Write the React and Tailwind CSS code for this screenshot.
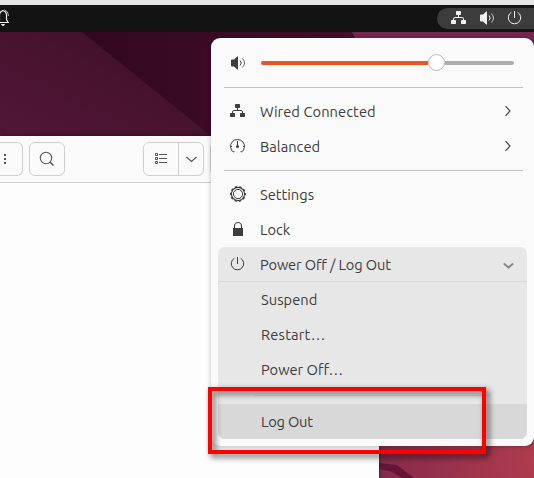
import React from "react";

function Wallpaper() {
  return (
    <svg className="absolute inset-0" width="534" height="478" viewBox="0 0 534 478">
      <defs>
        <linearGradient id="left" x1="0" y1="1" x2="1" y2="0">
          <stop offset="0" stopColor="#521737" />
          <stop offset="1" stopColor="#3d0f27" />
        </linearGradient>
        <linearGradient id="mid" x1="0" y1="0" x2="1" y2="0">
          <stop offset="0" stopColor="#33071f" />
          <stop offset="1" stopColor="#430f2a" />
        </linearGradient>
        <linearGradient id="warm" gradientUnits="userSpaceOnUse" x1="379" y1="478" x2="534" y2="440">
          <stop offset="0" stopColor="#852a4b" />
          <stop offset="1" stopColor="#b13c4e" />
        </linearGradient>
      </defs>
      <rect y="32" width="211" height="104" fill="url(#left)" />
      <path d="M82 32H360V136H211Z" fill="url(#mid)" />
      <path d="M352 32H534V240H460Z" fill="#76264f" />
      <rect x="379" y="240" width="155" height="238" fill="url(#warm)" />
      <path d="M379 463l18 2 17 13h-12l-10-6-13-3z" fill="#651637" />
    </svg>
  );
}

function NetworkIcon() {
  return (
    <svg width="16" height="16" viewBox="0 0 16 16" fill="currentColor">
      <rect x="5" y="1" width="5" height="4" rx=".7" />
      <rect x="0" y="10" width="5" height="4" rx=".7" />
      <rect x="10" y="10" width="5" height="4" rx=".7" />
      <path d="M7.500 5v3M2.500 10V9q0-1.500 1.500-1.500h7q1.500 0 1.500 1.500v1" fill="none" stroke="currentColor" />
    </svg>
  );
}

function VolumeIcon() {
  return (
    <svg width="16" height="16" viewBox="0 0 16 16" fill="none" stroke="currentColor">
      <path d="M1 5.500Q1 4.500 2 4.500H4L7.300 1.500H8V14.500H7.300L4 11.500H2Q1 11.500 1 10.500Z" fill="currentColor" stroke="none" />
      <path d="M10 5.500q2.500 2.500 0 5" />
      <path d="M12.300 3.500q4.400 4.500 0 9" opacity=".8" />
    </svg>
  );
}

function PowerIcon() {
  return (
    <svg width="16" height="16" viewBox="0 0 16 16" fill="none" stroke="currentColor">
      <path d="M7.500 1v7" />
      <path d="M4.300 2.300a6.200 6.200 0 1 0 6.400 0" />
    </svg>
  );
}

function GaugeIcon() {
  return (
    <svg width="16" height="16" viewBox="0 0 16 16" fill="none" stroke="currentColor">
      <path d="M3.500 14.200A7 7 0 1 1 11.500 14.200" />
      <path d="M7.500 3v5M1 8.500h1M13 8.500h1M3.500 14.200l.7-1.200M11.500 14.200l-.7-1.200" />
      <circle cx="7.500" cy="8.500" r="1.500" fill="currentColor" stroke="none" />
    </svg>
  );
}

function GearIcon() {
  return (
    <svg width="16" height="16" viewBox="0 0 16 16" fill="none" stroke="currentColor">
      <circle cx="8" cy="8" r="4.600" />
      <circle cx="8" cy="8" r="6.600" strokeWidth="1.100" />
      <circle cx="8" cy="8" r="7.300" strokeWidth="1.300" strokeDasharray="2.500 2.084" strokeDashoffset="1.250" />
    </svg>
  );
}

function LockIcon() {
  return (
    <svg width="16" height="16" viewBox="0 0 16 16" fill="none" stroke="currentColor">
      <rect x="3" y="7" width="10" height="8" fill="currentColor" stroke="none" />
      <path d="M4.500 7V5.200a3.500 3.700 0 0 1 7 0V7" strokeWidth="1.100" />
    </svg>
  );
}

function BellIcon() {
  return (
    <svg className="-ml-[5px]" width="16" height="18" viewBox="0 0 16 18" fill="none" stroke="currentColor">
      <path d="M3 13.500h11M4.500 13V6q0-3 3.500-4.500Q11.500 3 11.500 6v4.500l1.500 2.500" strokeWidth="1.200" />
      <path d="M9.500 1q4 1 4 6" opacity=".75" />
      <path d="M6 15h4l-1 1.800H7z" fill="currentColor" stroke="none" />
    </svg>
  );
}

function ChevronRight() {
  return (
    <svg className="-mt-0.5" width="6" height="12" viewBox="0 0 6 12" fill="none" stroke="#4a4a4a" strokeWidth="1.200">
      <path d="M.5 1.200 5 6 .5 10.800" />
    </svg>
  );
}

const font = "font-['Ubuntu','Noto_Sans',sans-serif]";

function Row({ icon, label, trailing, spacing = "" }) {
  return (
    <div className="flex h-[35px] items-center pl-[19px] pr-[23px]">
      <span className="w-[30px] shrink-0 pb-0.5">{icon}</span>
      <span className={`pt-0.5 text-[14.667px] leading-none whitespace-nowrap ${spacing}`}>{label}</span>
      <span className="ml-auto">{trailing}</span>
    </div>
  );
}

function SubItem({ label, spacing = "", className = "" }) {
  return (
    <div className={`flex h-[35px] items-center pl-[43px] text-[14.667px] leading-none ${className}`}>
      <span className={`pt-0.5 whitespace-nowrap ${spacing}`}>{label}</span>
    </div>
  );
}

function SystemMenu() {
  return (
    <div className={`absolute left-[211px] top-[38px] h-[408px] w-[323px] rounded-[9px] bg-[#fafafa] text-[#3d3d3d] shadow-[0_1px_5px_rgba(0,0,0,0.25)] ${font}`}>
      <div className="flex h-[49px] items-center pl-[19px]">
        <VolumeIcon />
        <div className="ml-[15px] flex w-[253px] items-center">
          <div className="h-1 w-[167px] rounded-l-full bg-[#ee5320]" />
          <div className="h-[17px] w-[17px] rounded-full border border-[#b5b5b5] bg-white" />
          <div className="h-1 flex-1 rounded-r-full bg-[#adadad]" />
        </div>
      </div>
      <div className="ml-[13px] h-px w-[299px] bg-[#c4c4c4]" />
      <div className="pt-1.5">
        <Row icon={<NetworkIcon />} label="Wired Connected" spacing="tracking-[0.08px]" trailing={<ChevronRight />} />
        <Row icon={<GaugeIcon />} label="Balanced" trailing={<ChevronRight />} />
      </div>
      <div className="ml-[13px] mt-1.5 h-px w-[299px] bg-[#c4c4c4]" />
      <div className="pt-1.5">
        <Row icon={<GearIcon />} label="Settings" />
        <Row icon={<LockIcon />} label="Lock" />
      </div>
      <div className="mx-[7px] overflow-hidden rounded-[7px] bg-[#e7e7e7]">
        <div className="flex h-[35px] items-center border-b border-[#d8d8d8] pl-3 pr-[13px]">
          <span className="w-[30px] pb-px"><PowerIcon /></span>
          <span className="pt-[3px] text-[14.667px] leading-none tracking-[-0.14px] whitespace-nowrap">Power Off / Log Out</span>
          <svg className="ml-auto mt-1" width="11" height="8" viewBox="0 0 11 8" fill="none" stroke="#858585" strokeWidth="1.800">
            <path d="m.8 1.500 4.700 4 4.700-4" />
          </svg>
        </div>
        <SubItem label="Suspend" spacing="tracking-[0.06px]" />
        <SubItem label="Restart…" spacing="tracking-[0.2px]" />
        <SubItem label="Power Off…" />
        <div className="flex h-[17px] items-center">
          <div className="ml-[37px] h-px w-[235px] bg-[#d5d5d5]" />
        </div>
        <SubItem label="Log Out" spacing="tracking-[-0.22px]" className="bg-[#d8d8d8]" />
      </div>
    </div>
  );
}

function FilesWindow() {
  return (
    <div className="h-[342px] w-[379px] bg-[#fdfdfd] shadow-[0_0_4px_rgba(0,0,0,0.5)]">
      <div className="flex h-[47px] items-start overflow-hidden border-b border-[#cfcfcf] bg-[#fafafa] pt-1.5 text-[#555]">
        <div className="flex h-[34px] w-[23px] items-center rounded-r-[6px] border border-l-0 border-[#cfcfcf] pl-1">
          <svg width="2" height="10" fill="currentColor">
            <path d="M0 0h2v2H0zM0 4h2v2H0zM0 8h2v2H0z" />
          </svg>
        </div>
        <div className="ml-1.5 flex h-[34px] w-9 items-center justify-center rounded-[6px] border border-[#cfcfcf]">
          <svg width="16" height="16" viewBox="0 0 16 16" fill="none" stroke="currentColor">
            <circle cx="7" cy="7" r="5.700" strokeWidth="1.100" />
            <path d="m11 11 3.500 3.500" strokeWidth="1.500" />
          </svg>
        </div>
        <div className="ml-[78px] flex h-[34px] w-[61px] rounded-[6px] border border-[#cfcfcf]">
          <div className="flex w-[35px] items-center border-r border-[#cfcfcf] pl-[11px]">
            <svg className="mb-px" width="12" height="11" viewBox="0 0 12 11" fill="none" stroke="currentColor">
              <path d="M.5.5h2v2h-2zM.5 4.500h2v2h-2zM.5 8.500h2v2h-2zM4 1.500h8M4 5.500h8M4 9.500h8" />
            </svg>
          </div>
          <div className="flex flex-1 items-center pl-[7px]">
            <svg className="mt-px" width="11" height="7" viewBox="0 0 11 7" fill="none" stroke="currentColor" strokeWidth="1.200">
              <path d="m.5 1 5 4.500 5-4.500" />
            </svg>
          </div>
        </div>
        <div className="ml-1.5 h-[34px] w-9 rounded-[6px] border border-[#cfcfcf]" />
      </div>
    </div>
  );
}

export default function App() {
  return (
    <div className="relative h-[478px] w-[534px] overflow-hidden bg-[#33071f]">
      <Wallpaper />
      <div className="relative flex h-full flex-col">
        <div className="h-[5px] bg-[#e3e4e7]" />
        <div className="flex h-[27px] items-start justify-between bg-[#131313] text-[#f2f2f2]">
          <div className="pt-[4px]"><BellIcon /></div>
          <div className="mt-[3px] flex h-[21px] w-[97px] items-center gap-3 rounded-l-full rounded-br-[7px] rounded-tr-[7px] bg-[#3c3c3c] pb-px pl-3.5">
            <NetworkIcon />
            <VolumeIcon />
            <PowerIcon />
          </div>
        </div>
        <div className="h-[104px]" />
        <FilesWindow />
      </div>
      <SystemMenu />
      <div className="absolute left-[208px] top-[387px] h-[67px] w-[278px] border-4 border-[#ff0000] drop-shadow-[3px_3px_3px_rgba(0,0,0,0.65)]" />
    </div>
  );
}
